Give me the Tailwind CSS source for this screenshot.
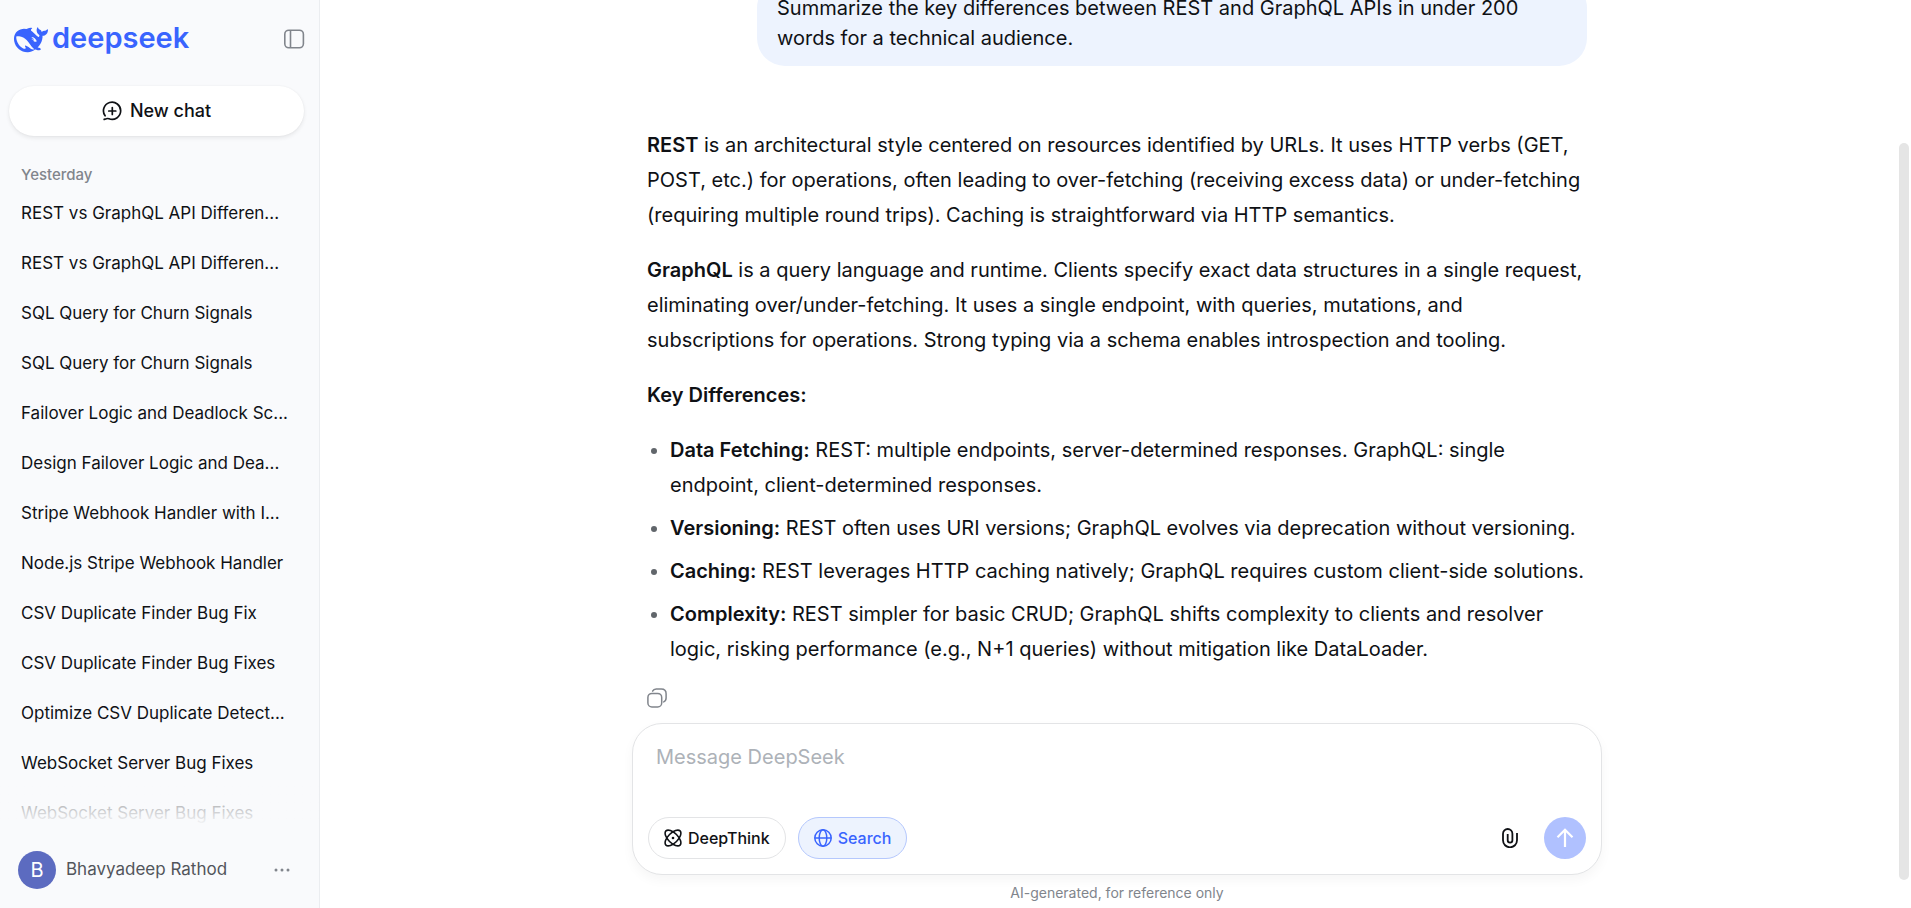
<!DOCTYPE html>
<html lang="en">
<head>
<meta charset="utf-8">
<meta name="viewport" content="width=device-width, initial-scale=1">
<title>DeepSeek</title>
<script src="https://cdn.jsdelivr.net/npm/@tailwindcss/browser@4"></script>
</head>
<body class="flex h-screen overflow-hidden bg-white font-['Inter','Noto_Sans',sans-serif] text-[#0f1115]">

<aside class="flex h-full w-80 shrink-0 flex-col border-r border-[#ebedf0] bg-[#f9fafc]">
  <header class="flex h-[77px] shrink-0 items-center justify-between px-[14px]">
    <a href="#" class="flex items-center gap-1 pt-[2px] text-[#3964fe]" aria-label="deepseek home">
      <svg class="size-[34px]" viewBox="0 0 24 24" fill="currentColor" aria-hidden="true"><path d="M23.748 4.482c-.254-.124-.364.113-.512.234-.051.039-.094.09-.137.136-.372.397-.806.657-1.373.626-.829-.046-1.537.214-2.163.848-.133-.782-.575-1.248-1.247-1.548-.352-.156-.708-.311-.955-.65-.172-.241-.219-.51-.305-.774-.055-.16-.11-.323-.293-.35-.2-.031-.278.136-.356.276-.313.572-.434 1.202-.422 1.84.027 1.436.633 2.58 1.838 3.393.137.093.172.187.129.323-.082.28-.18.552-.266.833-.055.179-.137.217-.329.14a5.526 5.526 0 01-1.736-1.18c-.857-.828-1.631-1.742-2.597-2.458a11.365 11.365 0 00-.689-.471c-.985-.957.13-1.743.388-1.836.27-.098.093-.432-.779-.428-.872.004-1.67.295-2.687.684a3.055 3.055 0 01-.465.137 9.597 9.597 0 00-2.883-.102c-1.885.21-3.39 1.102-4.497 2.623C.082 8.606-.231 10.684.152 12.85c.403 2.284 1.569 4.175 3.36 5.653 1.858 1.533 3.997 2.284 6.438 2.14 1.482-.085 3.133-.284 4.994-1.86.47.234.962.327 1.78.397.63.059 1.236-.03 1.705-.128.735-.156.684-.837.419-.961-2.155-1.004-1.682-.595-2.113-.926 1.096-1.296 2.746-2.642 3.392-7.003.05-.347.007-.565 0-.845-.004-.17.035-.237.23-.256a4.173 4.173 0 001.545-.475c1.396-.763 1.96-2.015 2.093-3.517.02-.23-.004-.467-.247-.588zM11.581 18c-2.089-1.642-3.102-2.183-3.52-2.16-.392.024-.321.471-.235.763.09.288.207.486.371.739.114.167.192.416-.113.603-.673.416-1.842-.14-1.897-.167-1.361-.802-2.5-1.86-3.301-3.307-.774-1.393-1.224-2.887-1.298-4.482-.02-.386.093-.522.477-.592a4.696 4.696 0 011.529-.039c2.132.312 3.946 1.265 5.468 2.774.868.86 1.525 1.887 2.202 2.891.72 1.066 1.494 2.082 2.48 2.914.348.292.625.514.891.677-.802.09-2.14.11-3.054-.614zm1-6.44a.306.306 0 01.415-.287.302.302 0 01.2.288.306.306 0 01-.31.307.303.303 0 01-.304-.308zm3.11 1.596c-.2.081-.399.151-.59.16a1.245 1.245 0 01-.798-.254c-.274-.23-.47-.358-.552-.758a1.73 1.73 0 01.016-.588c.07-.327-.008-.537-.239-.727-.187-.156-.426-.199-.688-.199a.559.559 0 01-.254-.078c-.11-.054-.2-.19-.114-.358.028-.054.16-.186.192-.21.356-.202.767-.136 1.146.016.352.144.618.408 1.001.782.391.451.462.576.685.914.176.265.336.537.445.848.067.195-.019.354-.25.452z"/></svg>
      <span class="pb-1 text-[29px] leading-8 font-semibold">deepseek</span>
    </a>
    <button type="button" aria-label="Toggle sidebar" class="text-[#81858c]">
      <svg class="size-[22px]" viewBox="0 0 22 22" fill="none" stroke="currentColor" stroke-width="1.6" aria-hidden="true"><rect x="1.8" y="2.2" width="18.6" height="17.6" rx="4"/><path d="M7.5 2.2v17.6"/></svg>
    </button>
  </header>

  <button type="button" class="mt-[9px] mr-[15px] ml-[9px] flex h-[50px] shrink-0 items-center justify-center gap-2 rounded-full bg-white text-lg font-medium shadow-[0_2px_4px_rgba(0,0,0,0.08),0_0_2px_rgba(0,0,0,0.05)]">
    <svg class="size-5" viewBox="0 0 20 20" fill="none" stroke="currentColor" stroke-width="1.7" stroke-linecap="round" aria-hidden="true"><path d="M3.1 14.8A8.6 8.6 0 1 1 7 17.8c-1-.4-1.6-.5-2.6-.1l-2.2.7"/><path d="M10.3 6.5v7M6.8 10h7"/></svg>
    New chat
  </button>

  <nav aria-label="Chat history" class="relative mt-[25px] min-h-0 flex-1 overflow-hidden text-[17px]">
    <h2 class="pl-[21px] text-[15px] leading-[27px] font-medium text-[#81858c]">Yesterday</h2>
    <ul>
      <li><a href="#" class="block truncate pr-5 pl-[21px] leading-[50px]">REST vs GraphQL API Differen...</a></li>
      <li><a href="#" class="block truncate pr-5 pl-[21px] leading-[50px]">REST vs GraphQL API Differen...</a></li>
      <li><a href="#" class="block truncate pr-5 pl-[21px] leading-[50px]">SQL Query for Churn Signals</a></li>
      <li><a href="#" class="block truncate pr-5 pl-[21px] leading-[50px]">SQL Query for Churn Signals</a></li>
      <li><a href="#" class="block truncate pr-5 pl-[21px] leading-[50px]">Failover Logic and Deadlock Sc...</a></li>
      <li><a href="#" class="block truncate pr-5 pl-[21px] leading-[50px]">Design Failover Logic and Dea...</a></li>
      <li><a href="#" class="block truncate pr-5 pl-[21px] leading-[50px]">Stripe Webhook Handler with I...</a></li>
      <li><a href="#" class="block truncate pr-5 pl-[21px] leading-[50px]">Node.js Stripe Webhook Handler</a></li>
      <li><a href="#" class="block truncate pr-5 pl-[21px] leading-[50px]">CSV Duplicate Finder Bug Fix</a></li>
      <li><a href="#" class="block truncate pr-5 pl-[21px] leading-[50px]">CSV Duplicate Finder Bug Fixes</a></li>
      <li><a href="#" class="block truncate pr-5 pl-[21px] leading-[50px]">Optimize CSV Duplicate Detect...</a></li>
      <li><a href="#" class="block truncate pr-5 pl-[21px] leading-[50px]">WebSocket Server Bug Fixes</a></li>
      <li><a href="#" class="block truncate pr-5 pl-[21px] leading-[50px]">WebSocket Server Bug Fixes</a></li>
    </ul>
    <div class="pointer-events-none absolute inset-x-0 bottom-0 h-10 bg-linear-to-t from-[#f9fafc] to-[#f9fafc]/50"></div>
  </nav>

  <button type="button" class="flex h-[82px] shrink-0 items-center pt-[6px] pr-[29px] pl-[18px] text-left text-[17px]">
    <span class="flex size-[38px] items-center justify-center rounded-full bg-[#5c6bc0] text-xl text-white">B</span>
    <span class="ml-[10px] flex-1 text-[#52555b]">Bhavyadeep Rathod</span>
    <svg class="h-1 w-4 text-[#81858c]" viewBox="0 0 16 4" fill="currentColor" aria-hidden="true"><circle cx="2" cy="2" r="1.5"/><circle cx="8" cy="2" r="1.5"/><circle cx="14" cy="2" r="1.5"/></svg>
  </button>
</aside>

<main class="relative flex h-full min-w-0 flex-1 flex-col items-center pl-[3px]">
  <section class="flex min-h-0 w-full max-w-[940px] flex-1 flex-col justify-end overflow-hidden text-xl" aria-label="Conversation">
    <p class="max-w-[830px] shrink-0 self-end rounded-[28px] bg-[#edf3fe] px-5 py-[13px] leading-[30px]">Summarize the key differences between REST and GraphQL APIs in under 200 words for a technical audience.</p>
    <article class="mt-[62px] flex shrink-0 flex-col gap-5 leading-[35px]">
      <p><strong class="font-semibold">REST</strong> is an architectural style centered on resources identified by URLs. It uses HTTP verbs (GET, POST, etc.) for operations, often leading to over-fetching (receiving excess data) or under-fetching (requiring multiple round trips). Caching is straightforward via HTTP semantics.</p>
      <p><strong class="font-semibold">GraphQL</strong> is a query language and runtime. Clients specify exact data structures in a single request, eliminating over/under-fetching. It uses a single endpoint, with queries, mutations, and subscriptions for operations. Strong typing via a schema enables introspection and tooling.</p>
      <p><strong class="font-semibold">Key Differences:</strong></p>
      <ul class="flex list-disc flex-col gap-2 pl-[23px] marker:text-[#61666b]">
        <li><strong class="font-semibold">Data Fetching:</strong> REST: multiple endpoints, server-determined responses. GraphQL: single endpoint, client-determined responses.</li>
        <li><strong class="font-semibold">Versioning:</strong> REST often uses URI versions; GraphQL evolves via deprecation without versioning.</li>
        <li><strong class="font-semibold">Caching:</strong> REST leverages HTTP caching natively; GraphQL requires custom client-side solutions.</li>
        <li><strong class="font-semibold">Complexity:</strong> REST simpler for basic CRUD; GraphQL shifts complexity to clients and resolver logic, risking performance (e.g., N+1 queries) without mitigation like DataLoader.</li>
      </ul>
    </article>
    <div class="flex shrink-0 pt-[21px] pb-[15px]">
      <button type="button" aria-label="Copy" class="text-[#81858c]">
        <svg class="size-5" viewBox="0 0 20 20" fill="none" stroke="currentColor" stroke-width="1.5" stroke-linecap="round" aria-hidden="true"><rect x=".9" y="5.4" width="13.8" height="13.6" rx="4"/><path d="M5.6 3.1C6.3 1.6 7.4.9 9.2.9h5.1c3.200 0 4.800 1.600 4.800 4.800v4.300c0 2-.7 3.200-2.400 3.900"/></svg>
      </button>
    </div>
  </section>

  <footer class="flex w-full max-w-[970px] shrink-0 flex-col">
    <form class="flex h-[152px] flex-col justify-between rounded-[30px] border border-[#e3e4e6] bg-white px-[15px] pt-[18px] pb-[15px] shadow-[0_5px_12px_rgba(0,0,0,0.04)]">
      <textarea rows="1" aria-label="Message DeepSeek" placeholder="Message DeepSeek" class="w-full resize-none px-2 text-xl leading-[30px] outline-none placeholder:text-[#adb2b8]"></textarea>
      <div class="flex items-center text-base font-medium">
        <button type="button" class="flex h-[42px] items-center gap-[6px] rounded-full border border-[#e3e4e6] px-[15px]">
          <svg class="size-[18px]" viewBox="0 0 18 18" fill="none" stroke="currentColor" stroke-width="1.6" aria-hidden="true"><ellipse cx="9" cy="9" rx="10" ry="4.9" transform="rotate(45 9 9)"/><ellipse cx="9" cy="9" rx="10" ry="4.9" transform="rotate(-45 9 9)"/><circle cx="9" cy="9" r="1.3" fill="currentColor" stroke="none"/></svg>
          DeepThink
        </button>
        <button type="button" aria-pressed="true" class="ml-3 flex h-[42px] items-center gap-[6px] rounded-full border border-[#b5c8fd] bg-[#edf3fe] px-[15px] text-[#3964fe]">
          <svg class="size-[18px]" viewBox="0 0 18 18" fill="none" stroke="currentColor" stroke-width="1.5" aria-hidden="true"><circle cx="9" cy="9" r="8.2"/><ellipse cx="9" cy="9" rx="3.8" ry="8.2"/><path d="M.8 9h16.4"/></svg>
          Search
        </button>
        <button type="button" aria-label="Attach file" class="ml-auto flex size-[42px] items-center justify-center">
          <svg class="h-5 w-4" viewBox="0 0 16 20" fill="none" stroke="currentColor" stroke-width="1.8" aria-hidden="true"><path d="M15 5v7.300a7 7 0 0 1-14 0V5.700a4.700 4.700 0 0 1 9.400 0v6.500a2.350 2.350 0 0 1-4.700 0V6"/></svg>
        </button>
        <button type="submit" aria-label="Send" class="ml-[13px] flex size-[42px] items-center justify-center rounded-full bg-[#b0c1ff] text-white">
          <svg class="size-5" viewBox="0 0 20 20" fill="none" stroke="currentColor" stroke-width="2.2" aria-hidden="true"><path d="M10 19V2M2.5 9.3 10 1.8l7.500 7.500"/></svg>
        </button>
      </div>
    </form>
    <p class="pt-[8px] pb-[5px] text-center text-sm leading-5 text-[#81858c]">AI-generated, for reference only</p>
  </footer>

  <div class="absolute top-[143px] right-[2px] bottom-7 w-[10px] rounded-full bg-[#e5e5e5]" aria-hidden="true"></div>
</main>
</body>
</html>
